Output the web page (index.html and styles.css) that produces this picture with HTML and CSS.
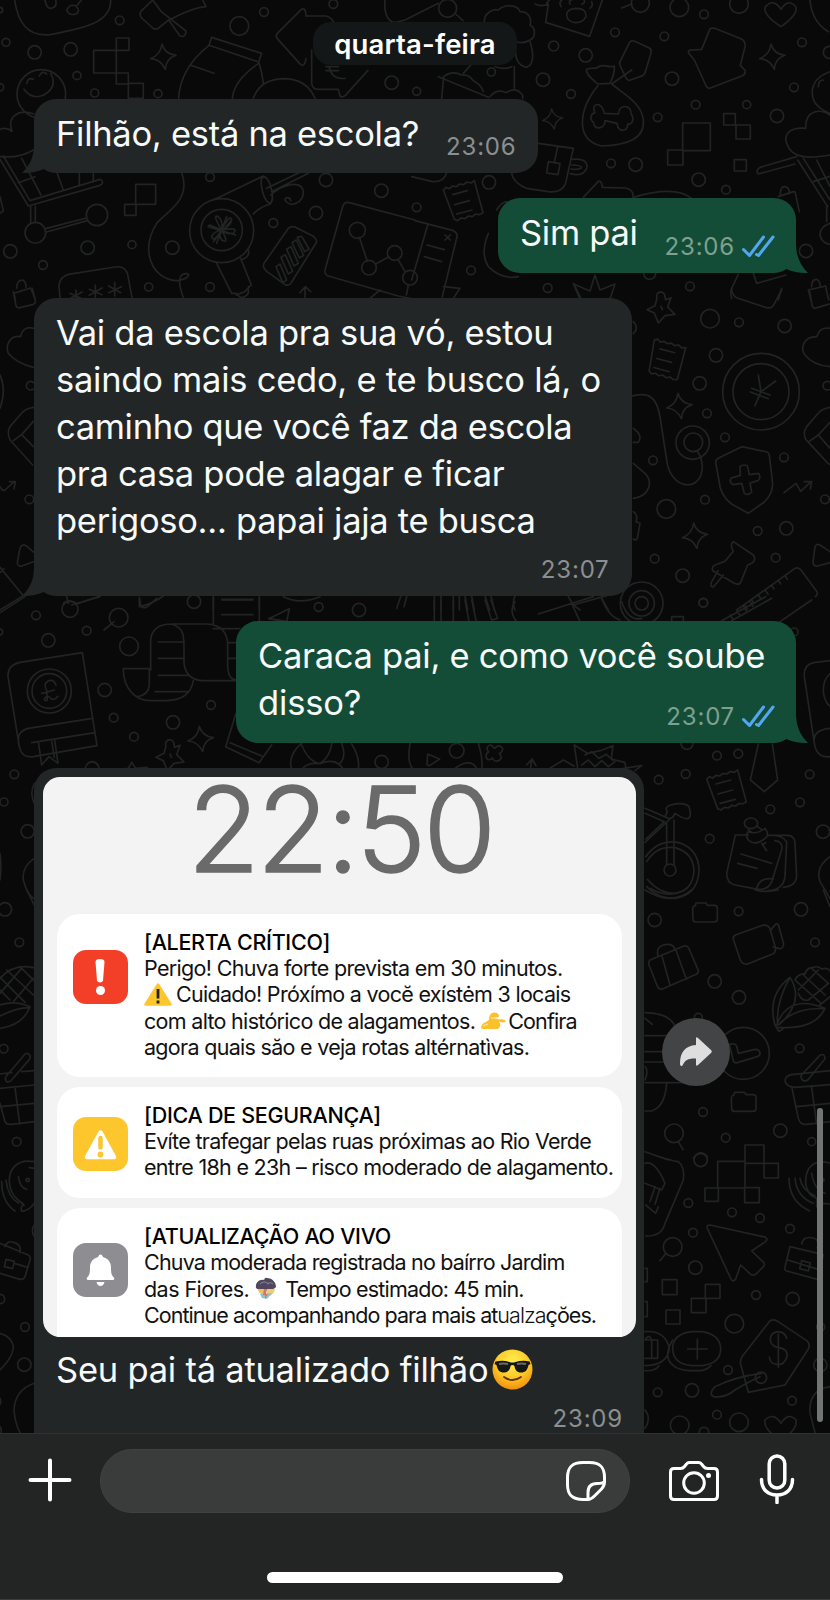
FILE: index.html
```html
<!DOCTYPE html>
<html lang="pt-BR">
<head>
<meta charset="utf-8">
<title>Conversa</title>
<link rel="stylesheet" href="styles.css">
</head>
<body>
<div class="screen">
<main class="chat">
<svg class="wallpaper" width="830" height="1433" viewBox="0 0 830 1433" aria-hidden="true">
<defs>
<path id="spark" d="M-4-38Q4-8 38-4Q8 6 6 38Q-8 8-38 6Q-8-6-4-38Z"/>
<path id="receipt" d="M-58-40l8-8 10 4 10-8 11 2 10-8 12 2 10-8 12 3 10-7 26 96-12 6-10-2-10 8-12-2-10 8-12-2-10 8-10-4zM-30-26l44-12M-24 4l44-12M-18 32l46-12"/>
<path id="star" d="M-12-30C-20-50 12-58 12-34L14-26 30-32 20-4 42 18 12 22-8 44-20 14-42 4-18-8ZM0-6l4 10"/>
</defs>
<g transform="scale(.33333)">
<path d="M44 0C55 80 95 110 150 104C210 90 335 80 332 0M135 0q5 30 22 24 15-5 10-24M200 30q10-20 28-12 15 15 0 24-22 6-28-12M232 15l12-15M458 0L425 32q-10 10 0 22l33 30q10 8 20-2l28-22 34 48q18 5 18-15L484 35 458 0M505 62C540 40 590 22 618 20L608 0"/>
<path d="M281 151h68v68h-68zM349 114h38v37h-38zM349 219h36v33h-36zM385 250h45v45h-45z"/>
<path d="M635 112l150 48-9 26-149-50zM627 136Q540 205 536 295M776 186Q788 225 790 252M776 190Q702 240 697 295M570 195l72 25M760 295Q780 238 850 236 920 236 945 295"/>
<path d="M918 48Q918 22 904 28L832 100q-7 8 0 16l70 78q12 8 16-18M918 48h60q20 5 25 25M935 150v100q2 18 20 18h60l5 20q8 6 16-2l68-75M1035 235q-40 5-48-35M978 200h38M978 212h38"/>
<circle cx="124" cy="282" r="73"/><path d="M72 268Q95 300 130 286 175 260 152 220M80 250q5-20 20-12M118 228q8-18 22-6M0 388q20-8 36 6C20 350 55 325 102 342M0 470q60 5 100-20"/>
<path d="M0 478L85 618l215-62q16-10 0-18L90 602 10 468M55 548l50-18M65 475l58 110M170 515l20 55M238 518v40M280 518v28M92 618v48M106 618v48M137 686l122-32M140 696l122-34M0 590l10 42-10 8"/><circle cx="106" cy="698" r="31"/><circle cx="291" cy="645" r="32"/>
<path d="M407 553h60v60h-60zM374 613h34v33h-34zM545 518C575 600 500 635 470 670 420 750 455 835 525 842 575 840 575 810 545 825 530 840 545 880 552 898"/>
<circle cx="665" cy="692" r="96"/><circle cx="665" cy="690" r="62"/><path d="M665 690Q635 640 655 650 670 665 665 690 690 640 695 660 690 680 665 690 720 680 700 700 680 705 665 690 690 735 665 720 655 705 665 690 640 730 635 710 640 695 665 690 610 680 630 675ZM680 650l-30 80M625 680l82 25M640 725l55-65"/>
<path d="M640 600L790 528M760 642Q780 620 812 612M790 528c25 10 35 75 20 82-20-5-35-70-20-82M800 565l100-48M815 575l110-55M812 585C850 550 905 540 910 575 910 610 870 625 855 600 855 590 870 590 872 602M650 790l45 90 15 0M722 775l32 80-20 20-25 10M745 750q5 20-18 28M710 880q15 25 35 0v-20"/>
<path d="M865 685L792 790q-6 12 8 24l55 40q10 5 18-5l75-120q6-10-8-20l-55-28q-12-4-20 4ZM828 800l12-8 20 48-12 8zM843 772l13-8 22 50-13 8zM860 748l13-8 22 50-13 8zM876 728l13-8 22 46-13 8zM892 712l13-3 22 38-13 8z"/>
<path d="M1245 660L1048 608q-15-4-20 12L975 810q-2 14 10 18l210 60 50 10M1078 712l24 72M1127 792l40-22M1195 780l20 35M1225 855l-6 30M1110 895l30-25"/><circle cx="1072" cy="691" r="24"/><circle cx="1107" cy="803" r="22"/><circle cx="1184" cy="759" r="22"/><circle cx="1230" cy="833" r="22"/>
<path d="M180 895l-3-40q4-25 28-32l140-22q30-5 38 22l14 75M228 870v36M210 880l36 16M246 876l-36 20M286 855v40M268 868l38 16M306 864l-38 22M344 848v40M326 858l36 20M364 860l-38 18M42 880l50-16 12 30M42 880l4 20M50 865q0-25 18-25 10 5 10 22M915 900v-38M900 878l16-18 16 15"/>
</g>
<g class="dots" transform="scale(.33333)">
<circle cx="18" cy="127" r="12"/><circle cx="104" cy="157" r="20"/><circle cx="212" cy="148" r="20"/><circle cx="359" cy="61" r="13"/><circle cx="231" cy="227" r="12"/><circle cx="284" cy="279" r="12"/><circle cx="474" cy="281" r="12"/><circle cx="718" cy="78" r="28"/><circle cx="792" cy="36" r="13"/><circle cx="1000" cy="12" r="13"/><circle cx="1175" cy="248" r="20"/><circle cx="0" cy="262" r="11"/><circle cx="0" cy="30" r="8"/><circle cx="31" cy="754" r="20"/><circle cx="129" cy="795" r="13"/><circle cx="263" cy="743" r="20"/><circle cx="396" cy="734" r="12"/><circle cx="446" cy="861" r="12"/><circle cx="517" cy="743" r="20"/><circle cx="630" cy="531" r="13"/><circle cx="630" cy="861" r="13"/><circle cx="820" cy="669" r="13"/><circle cx="948" cy="639" r="20"/><circle cx="978" cy="540" r="20"/><circle cx="1144" cy="572" r="20"/>
<use href="#spark" x="490" y="170"/>
</g>
<g transform="translate(415 0) scale(.33333)">
<path d="M-90 0Q-95 60-60 68L-30 60 70 10M122 42l22 20M360 12q20 10 40 0l-8 55 132 42L562 0M395 10l8-10M455 45q0-18 28-20 32 0 30 25-10 18-30 18-25 0-28-23M438 20q-8-15 5-22M525 25q10-5 5-20M465 12q-5-12 5-12M500 12q10 0 8-12M620 24l30-12"/><circle cx="98" cy="25" r="27"/><circle cx="676" cy="10" r="27"/>
<path d="M208 68C205 40 235 25 250 30 270 10 310 15 315 35 345 35 350 60 345 75 365 85 360 115 345 120 330 130 320 130 305 125M345 125Q365 190 335 202 300 195 302 150M298 200v65M70 230l150 62M80 295l6-65Q110 210 140 225 160 222 175 242 200 255 205 275M145 220l25-28M225 290q20-25 48-12 30-20 50 8v10M240 200q30 10 50 0"/>
<path d="M645 125q6-4 14-1l44 20q8 5 5 15l-18 60q-5 8-12 10l-34 12q-8 1-11-7l-18-38q-3-8 2-15zM548 252C530 235 510 220 515 208 530 200 545 210 550 200 570 190 580 205 598 198 600 220 592 235 585 250ZM548 258C490 330 480 420 560 438 640 435 690 415 685 360 680 310 630 285 590 252L650 210M568 340l42 2C612 310 650 315 648 340 660 360 650 375 638 372 640 395 610 400 606 370L570 362C570 390 535 390 536 368 520 355 530 340 540 338 525 310 560 300 568 340Z"/>
<path d="M885 86q8-3 18 0l75 30q15 8 12 25l-14 55 14 15q3 12-8 16l-98 38q-8 0-12-10l-34-75-18-22q0-10 16-8l24-2zM1098 80Q1045 45 1050 22 1075-8 1098 28 1120-8 1143 22 1148 45 1098 80ZM1185 0q5 65 55 95"/>
<path d="M803 369h83v83h-83zM758 450h46v45h-46zM926 341h35v34h-35zM963 375h43v42h-43zM958 479h36v34h-36z"/>
<path d="M370 430l105 15-20 90Q450 580 400 575L335 565Q290 545 290 515M428 440l-10 48M400 485l35 6-6 33-34-5zM472 478q45-5 44 25-10 28-50 18M470 495q30 0 30 8-10 8-32 4M-10 530l60 14q35 5 45-25M505 592l45-48q10-3 12 18l70 2q25 5 22 28M655 592Q780 555 830 595"/>
<path d="M1245 215Q1190 235 1192 280 1192 320 1245 340M1225 240q-15 0-15 20M1245 345C1215 325 1170 330 1172 385 1130 380 1105 400 1115 430 1130 480 1190 475 1245 465M1145 470l-110 32q-15 10-5 20l110-30M1148 480l90 140M1165 475l80 125M1195 545l50-16M1205 480l40 80M1235 620v45M1245 670q-30 10-30 35 5 25 30 28M1090 590l45-15q5-2 6 5l12 55M1096 585q0-25 12-25 14 0 16 20"/>
<path d="M1180 870l52-12q5 30 10 42M1180 870l8 30M1190 860q0-22 14-22 10 4 12 20M245 630q15-25 32-25M220 700q-25 60 0 100 40 40 90 30M0 662l115 30q15 8 10 22L80 898M38 675L-10 840M36 735l52 14M28 770l52 15M90 705l16 15M106 705l-16 15M85 860l50 5-20 30M540 825l15 45 45-18-15 45M540 825l-15 48-48-20 20 40M475 850l20 48M950 895q-5-20 0-30l20-42M1015 820l10 30 88-25M1100 865l-10 35"/>
</g>
<g class="dots" transform="translate(415 0) scale(.33333)">
<circle cx="416" cy="138" r="15"/><circle cx="512" cy="166" r="20"/><circle cx="600" cy="97" r="13"/><circle cx="748" cy="109" r="13"/><circle cx="229" cy="216" r="12"/><circle cx="384" cy="239" r="20"/><circle cx="468" cy="282" r="13"/><circle cx="728" cy="352" r="13"/><circle cx="771" cy="236" r="20"/><circle cx="842" cy="314" r="13"/><circle cx="995" cy="314" r="12"/><circle cx="1086" cy="348" r="20"/><circle cx="1137" cy="262" r="13"/><circle cx="1161" cy="127" r="13"/><circle cx="1243" cy="157" r="18"/><circle cx="793" cy="22" r="28"/><circle cx="867" cy="43" r="13"/><circle cx="972" cy="12" r="28"/><circle cx="588" cy="490" r="13"/><circle cx="662" cy="494" r="20"/><circle cx="851" cy="539" r="20"/><circle cx="933" cy="569" r="13"/><circle cx="222" cy="547" r="20"/><circle cx="5" cy="622" r="13"/><circle cx="168" cy="811" r="13"/><circle cx="398" cy="864" r="13"/><circle cx="825" cy="859" r="13"/><circle cx="1173" cy="753" r="20"/><circle cx="704" cy="820" r="18"/><circle cx="5" cy="274" r="12"/>
<use href="#spark" x="1072" y="170"/><use href="#spark" transform="translate(413 357) scale(.8)"/><use href="#receipt" x="143" y="610"/>
</g>
<g transform="translate(0 290) scale(.33333)">
<path d="M40 5l8 42q3 8 12 6l40-10q8-3 6-12L97-5M100 115C80 108 65 120 62 140 30 135 15 165 25 190 45 215 70 225 100 232M0 255q20 45 0 100M100 352Q75 355 60 375L30 410q-10 15 0 40l68 75M40 452l25-18L100 470M65 434l35-40M0 590q8 15 15 10l28-25M28 575h18l-4 22M60 775q5-15 18-8l24 20M60 775l-8 42q0 12 12 12l36-14M0 832l70 85L0 960M0 848l12-12M418 950v-22M420 950q40-10 70-32M640 918v42M778 918v42M665 930h94M850 920q50 25 110 0M190 940q15-15 40 0M230 942l70-24M200 920l5 20M1190 955l12-35M1220 920l-8 30"/>
</g>
<g transform="translate(415 290) scale(.33333)">
<path d="M950-5q0 20 15 28l90 30q15 4 22-10L1100 0M1184 5l8 44q3 8 14 4l40-12M1245 115C1220 110 1210 125 1205 140 1165 140 1155 175 1170 195 1190 220 1220 228 1245 230"/>
<circle cx="1038" cy="305" r="115"/><circle cx="1038" cy="305" r="84"/><path d="M1030 255l8 50 44-32M1038 305l-18 42M1010 295l55 20M1006 306l54 20"/>
<path d="M652 318C700 305 725 320 735 380L755 510C765 600 860 610 862 530Q860 500 848 485"/><circle cx="833" cy="458" r="50"/><circle cx="835" cy="457" r="28"/>
<path d="M980 470l76 16q6 2 7 10l10 85q0 30-25 55l-48 34-50-28q-35-25-38-70l-10-55q2-10 8-12zM975 530q8-8 22-3l6 27 28-4q8 14-2 22l-24 7 5 27q-10 12-22 4l-8-30-27 4q-12-10-4-20l27-8z"/>
<path d="M1107 608l36-28 14 24 32-30M1168 575l22 0-4 22M1245 352Q1220 355 1205 375L1175 410q-12 15-3 38l70 75M1182 455l28-20 35 40M1210 435l35-38M655 95q18 18 0 36M655 415q30 20 15 42h-15M655 520l35 30q20 20 10 45-10 25-45 30M655 665q15 10 8 30l12 5-8 45q-3 8-12 2"/>
<path d="M955 755l60 40q10 15-5 25l-12 5-20 50q-5 12-20 5l-65-38q-5-15 15-20l22-8 25-30q-12-20 0-29zM925 855l-30 36q-10 0-6-14l20-35M1200 770q5-10 15-5l30 20M1200 770l-6 48q2 12 14 10l37-10M965 960l175-125q10-5 18 5l48 65q3 10-5 15M990 946l7 11M1010 930l7 11M1030 915l7 11M1050 900l9 13M1070 886l7 11M1090 871l7 11M1110 857l7 11"/>
<circle cx="680" cy="940" r="64"/><circle cx="680" cy="940" r="38"/><circle cx="680" cy="940" r="20"/><path d="M58 918v42M78 918v42M115 918v42M133 918v42M150 918l8 42M170 918l8 42M210 918l14 42M228 918l10 42M300 918q-10 20 0 42M460 920l15 25 100-28M475 945l20 15M560 925l20 35"/>
</g>
<g class="dots" transform="translate(415 290) scale(.33333)">
<circle cx="885" cy="86" r="28"/><circle cx="972" cy="97" r="13"/><circle cx="1109" cy="108" r="20"/><circle cx="903" cy="196" r="20"/><circle cx="854" cy="280" r="20"/><circle cx="876" cy="370" r="13"/><circle cx="930" cy="442" r="13"/><circle cx="714" cy="511" r="13"/><circle cx="1107" cy="502" r="13"/><circle cx="1230" cy="628" r="13"/><circle cx="870" cy="629" r="13"/><circle cx="754" cy="657" r="28"/><circle cx="1028" cy="723" r="13"/><circle cx="1114" cy="715" r="20"/><circle cx="719" cy="806" r="13"/><circle cx="803" cy="857" r="20"/><circle cx="1082" cy="803" r="13"/><circle cx="865" cy="938" r="13"/><circle cx="1237" cy="287" r="13"/><circle cx="-1153" cy="287" r="13"/><circle cx="-1157" cy="628" r="13"/>
<use href="#spark" x="793" y="348"/><use href="#spark" x="840" y="737"/><use href="#star" x="738" y="55"/><use href="#receipt" transform="translate(748 214) rotate(30)"/>
</g>
<g transform="translate(0 600) scale(.33333)">
<path d="M247 158L60 187Q22 195 24 230L58 440Q65 475 100 470L291 437ZM58 440Q45 395 85 385L278 355M95 428L285 398M115 425l10 70 22-25 27 20-10-70M155 424l8 48"/>
<circle cx="148" cy="273" r="66"/><circle cx="148" cy="273" r="52"/><path d="M168 256q-5-18-22-14-18 8-6 30l2 28q-12 5-8-5 10-12 20 2 10 5 20-8M125 280l38-10"/>
<path d="M0 38L75-10M215 15L300-10M418-8l4 24q8 15 25 0L470-5M312 90l30-25M640-5v76M778-5v76M665 44h94M665-2h94M452 210V130C450 85 480 72 515 72H620Q685 75 683 140V200Q685 240 710 240M515 72C555 85 552 110 552 160V190Q558 240 610 242H705M475 126h78M475 175h78M475 226h90M465 275h100M370 206h78M370 206C370 270 410 302 450 302H500Q570 300 580 242M448 206v50Q445 285 412 290M685 128h30M685 175h30M640 86h80"/>
<path d="M806 56l62-30-8 40zM806 56l55 8M708 340L677 440 777 488 815 435M690 428l95 40M905 430C880 450 865 480 875 508M905 435q20 50 55 56 30-20 35-60M960 491q-40-5-55 18M960 491q50-20 70 18M1055 432q25 40 20 75M1025 430q15 40-5 60M1230 430q-10 60 10 78M255 505q5-20 25-20 15 5 18 22M350 508l35-3 10-18 12 18 35-3M103 550q-15 30 0 60M103 775Q65 800 70 840 80 880 100 895M0 760q5 40 0 80"/>
<circle cx="210" cy="28" r="24"/><circle cx="356" cy="53" r="28"/>
</g>
<g class="dots" transform="translate(0 600) scale(.33333)">
<circle cx="108" cy="46" r="13"/><circle cx="145" cy="121" r="20"/><circle cx="260" cy="92" r="13"/><circle cx="387" cy="139" r="28"/><circle cx="314" cy="270" r="20"/><circle cx="341" cy="353" r="13"/><circle cx="402" cy="410" r="13"/><circle cx="519" cy="367" r="20"/><circle cx="633" cy="315" r="13"/><circle cx="43" cy="523" r="13"/><circle cx="12" cy="606" r="12"/><circle cx="83" cy="694" r="20"/><circle cx="582" cy="5" r="20"/><circle cx="956" cy="21" r="13"/><circle cx="1077" cy="30" r="20"/><circle cx="1145" cy="486" r="20"/><circle cx="-2" cy="96" r="10"/>
<use href="#spark" x="602" y="417"/><use href="#star" x="510" y="468"/>
</g>
<g transform="translate(415 600) scale(.33333)">
<path d="M58 0v66M78 0v66M115 0v66M150 0l12 65M170 0l14 65M210 0l20 60 18-5M228 0l18 50M300 5q-20 30 5 60M370 42L535-10M470 10l25 55M560-5q20 55 55 65M620 5q20 60 60 50M770 65V50h35v15M920 62L1052-10M950 62L1070-5M1095 65L1190 0M945 45l9 13M965 32l9 13M985 19l9 13M1005 6l9 13"/>
<path d="M1245 182L1195 188Q1165 195 1168 230L1198 430Q1205 475 1245 470M1198 430Q1190 390 1245 385M1245 220q-20 20-20 50 0 30 20 50M1030 432L1006 540 1048 575 1088 540 1072 432M38 462l36 15-30 20-8-3zM188 510q-20-40-68-5M190 430q15 50 10 80M218 440q10-12 20 5 15-15 25 0 0 12-10 15 12 15-2 22-15 5-18-8-15 12-20-3 0-12 8-15-8-10-3-16zM335 495l16-18 12 20M351 477l-5 30M400 508l45-28 32 18M478 435l10 70M478 435l40 25 38-8 38-15-5 40 40 10 5 22M510 465l20-10 22 20 22-12 20 18M500 495l20-15 20 20 20-18 20 18 20-15M625 505l55-8-20 15"/>
<path d="M690 625l75 32-75 70M690 640l58 25-55 52M755 670v125M777 660v135M750 650q20 15 30-10 60 40 42-20-15-15-55-5-20 5-10 20zM960 705H1000M960 710L935 820Q935 850 960 855L1030 868Q1060 870 1070 845L1100 750Q1105 725 1080 722M1025 865q10-35 50-28M1065 705q35 0 50 20L1110 830Q1105 870 1060 872M1060 706h60q20 2 20 25l5 100Q1140 860 1105 862M978 762l92 28M968 790l58 15M1000 695q25 10 50-10 15 20 0 30-30 25-50 5-10-15 0-25M1000 690l12 8M1028 680l12 8M1040 730l15 22M1052 728l-10 6"/><ellipse cx="1008" cy="670" rx="20" ry="16"/>
<circle cx="765" cy="810" r="18"/><path d="M692 770q40-55 100-42 60 20 60 85-5 75-75 82-50 0-82-35M695 785q30-50 85-42 55 15 57 70-5 62-60 67-45 0-80-42"/>
<path d="M1245 770Q1200 800 1215 845L1245 895"/>
</g>
<g class="dots" transform="translate(415 600) scale(.33333)">
<circle cx="865" cy="8" r="13"/><circle cx="1137" cy="96" r="12"/><circle cx="125" cy="452" r="22"/><circle cx="816" cy="430" r="18"/><circle cx="906" cy="467" r="13"/><circle cx="970" cy="461" r="13"/><circle cx="731" cy="539" r="13"/><circle cx="812" cy="522" r="13"/><circle cx="1184" cy="523" r="13"/><circle cx="1155" cy="607" r="13"/><circle cx="1066" cy="628" r="13"/><circle cx="884" cy="716" r="13"/><circle cx="1224" cy="695" r="20"/>
<use href="#receipt" x="933" y="578"/>
</g>
<g transform="translate(0 890) scale(.33333)">
<path d="M80 0l25 50M0 265q40-45 100-32M20 240l80 75M0 262l75 75M0 300l30 30M60 230l42 42M100 265L40 335M65 235L0 310M0 345q45-15 90 5-20 55-90 65M0 378q50-25 90-25M20 575q-8-10 0-18l55-65q10-5 15 5 2 10-5 15l-50 58q-8 8-15 5zM0 552l35-4M65 545l38-3M0 595l103-10M0 650l103-10M0 640l15 55q5 10 20 8l68-8M45 592l14 110"/>
<circle cx="15" cy="58" r="20"/><circle cx="58" cy="157" r="13"/><circle cx="11" cy="476" r="13"/><circle cx="50" cy="755" r="13"/>
<path d="M103 815C50 805 20 840 30 890 35 920 60 935 70 942q5 10-2 0-8 20-2 22 25-5 36-24M55 860q5 35 25 38M5 875q0 60 40 88M18 870q5 50 38 70M103 835l-15-2M0 1060l85 35q8 5 5 15l-15 50q-5 10-15 8L0 1150M15 1070q8-20 25-13 25 5 20 30M18 1108l25 6-5 22-25-6zM43 1120l40 12"/><circle cx="83" cy="870" r="5"/><circle cx="75" cy="1311" r="13"/><circle cx="0" cy="1227" r="14"/><circle cx="73" cy="1424" r="20"/><path d="M103 1005q-12 15 0 35M0 1330q35 10 40 40Q40 1400 0 1440M103 1480Q45 1500 42 1560 45 1600 60 1628M0 1525q4 10 0 18M0 1610q5 5 3 18"/>
</g>
<g transform="translate(415 890) scale(.33333)">
<path d="M690 0q80 50 140 0M705-5q60 35 110 0M1020 0q30 8 70 0M1225 0l20 50M833 60q0-12 8-13l2-8h30l4 7h22q8 0 8 8v34q0 8-10 8h-54q-9 0-9-8zM949 628q0-12 8-13l2-8h30l4 7h22q8 0 8 8v34q0 8-10 8h-54q-9 0-9-8z"/>
<path d="M955 148q-2-10 8-14l80-28q15-3 22 10l16 56q3 14-8 20l-75 30q-15 3-22-12zM1065 122l18-20q6-2 8 5l15 55q-2 15-12 14l-20-5M705 210l102-42q10-2 14 6l28 65q3 10-5 14l-102 44q-9 2-14-6l-26-66q-3-9 3-15zM740 195l25 90M782 178l32 90M730 200q-10-30 20-36 25-5 30 15"/>
<path d="M1080 405q-25-90 45-143 45 70-30 140M1125 262q-40 70-38 135M1085 405Q1120 310 1230 355 1200 420 1090 412M1090 405Q1140 350 1228 356M1080 405l12 20 14-10M1140 270q10-20 30-18 5-20 25-20 15-5 25 5 15-5 25 5M1140 270l78 70M1165 255l65 60M1190 235l50 45M1240 280l-60 50M1210 240l-60 60M1245 320l-30 25M1150 310q10 25 30 20"/>
<circle cx="985" cy="490" r="78"/><path d="M945 470q-5-10 8-8 8-2 12 6l5 22 50-12q15 0 15 12 0 8-8 10l-60 18q-8 2-12-5zM690 368Q770 370 782 415M690 385l22 18M690 437h70M690 485h55M690 516h60M690 578h110M755 580q-5 70-45 83h-20M690 530q12 10 0 40"/>
<path d="M1162 570q-8-10 0-18l52-55q10-8 15 2 2 10-5 15l-45 55q-8 8-17 1zM1245 542l-115 12q-20 3-20 20 5 18 30 18l105-8M1130 590l20 95q5 20 25 18l70-8M1145 650l100-10M1190 592l15 110"/>
<circle cx="777" cy="730" r="28"/><path d="M790 755l14 24M835 805q20-30 42-5M690 785l70 25M690 785Q760 810 790 815 810 830 805 870L750 1000Q740 1040 692 1038M690 820q30-10 60 60l-10 20-50-20M720 890l-15 45M735 895l-15 48M692 945l30 25 8-20"/>
<path d="M990 765h57v55h-57zM908 814h82v80h-82zM1047 820h43v44h-43zM870 894h40v40h-40zM989 893h44v45h-44z"/>
<path d="M1245 820C1200 805 1170 830 1172 880 1175 905 1190 920 1205 925v25l18-10 20 2M1190 850q8 50 40 60M1122 865q0 70 62 98M1140 865q5 55 55 75M1155 865q5 35 45 52"/>
<path d="M885 1005l165 36q10 5 2 14l-42 28 36 34q5 8-2 14l-22 22q-8 5-15 0l-30-28-15 42q-8 12-15-2L877 1015q-3-10 8-10zM1125 1070l100 24-15 75-95-26q-8-3-5-12zM1160 1062q5-25 35-18 20 5 12 30M1118 1110l104 32M1160 1112l26 7-6 24-26-7z"/>
<circle cx="773" cy="1071" r="28"/><path d="M753 1090l-18 22M742 1169h44v45h-44zM871 1183h44v42h-44zM829 1225h44v43h-44zM753 1260h42v42h-42zM690 1135h7v40h-7M690 1235h7v45h-7"/>
<path d="M830 1325h32q55 10 55 52 0 42-55 50h-32q-55-5-57-50 0-45 57-52ZM773 1350q-30 50 0 75 15 15 50 17h30q20 0 35-15M818 1377h58M847 1347v60M690 1325q60-5 73 50-5 50-73 52M690 1442q30 2 42-15M690 1350h38v55h-38M710 1350v55M690 1350q12-20 20 0"/>
<path d="M1065 1292q10-5 20 0l90 60q12 10 5 25l-70 108-110 22L976 1420q0-10 5-20zM1115 1345q-5-20-28-20-25 5-20 30 5 15 25 18 30 5 23 30-10 25-30 20-20-2-22-22M1090 1332v100M1040 1450Q960 1460 900 1490 880 1510 895 1520 930 1525 960 1500 1000 1475 1035 1460"/><circle cx="1038" cy="1463" r="17"/>
<path d="M1098 1650Q1045 1620 1050 1590 1075 1565 1098 1600 1120 1565 1143 1590 1148 1620 1098 1650ZM1245 1490Q1180 1500 1185 1570L1200 1628M690 1560q20 25 0 55"/>
</g>
<g class="dots" transform="translate(415 890) scale(.33333)">
<circle cx="719" cy="90" r="20"/><circle cx="971" cy="64" r="13"/><circle cx="1158" cy="58" r="20"/><circle cx="1200" cy="157" r="13"/><circle cx="899" cy="274" r="20"/><circle cx="972" cy="322" r="20"/><circle cx="850" cy="382" r="12"/><circle cx="1154" cy="475" r="13"/><circle cx="864" cy="666" r="13"/><circle cx="932" cy="743" r="13"/><circle cx="1096" cy="722" r="20"/><circle cx="1190" cy="755" r="12"/><circle cx="857" cy="810" r="20"/><circle cx="820" cy="939" r="13"/><circle cx="951" cy="967" r="13"/><circle cx="1035" cy="984" r="13"/><circle cx="834" cy="1028" r="13"/><circle cx="1125" cy="1016" r="13"/><circle cx="841" cy="1133" r="20"/><circle cx="1023" cy="1215" r="13"/><circle cx="1133" cy="1227" r="20"/><circle cx="958" cy="1301" r="28"/><circle cx="1217" cy="1311" r="12"/><circle cx="939" cy="1440" r="13"/><circle cx="1216" cy="1425" r="20"/><circle cx="728" cy="1507" r="13"/><circle cx="831" cy="1501" r="20"/><circle cx="1131" cy="1532" r="13"/><circle cx="906" cy="1574" r="13"/><circle cx="972" cy="1597" r="28"/><circle cx="794" cy="1606" r="28"/><circle cx="867" cy="1626" r="14"/><circle cx="1222" cy="870" r="5"/>
</g>
</svg>

<div class="date"><span class="date-text">quarta-feira</span></div>

<article class="bubble in b1">
<svg class="tail tail-in" width="24" height="30" viewBox="0 0 24 30"><path d="M12 0C12 13 9 21 0 30c9 0 16-1 24-5V0z"/></svg>
<p class="text"><span class="l1">Filhão, está na escola?</span></p>
<div class="meta"><time>23:06</time></div>
</article>

<article class="bubble out b2">
<svg class="tail tail-out" width="24" height="30" viewBox="0 0 24 30"><path d="M12 0C12 13 16 22 24 30c-9 0-16-1-24-5V0z"/></svg>
<p class="text"><span class="l2">Sim pai</span></p>
<div class="meta"><time>23:06</time><svg class="ticks" width="33" height="23" viewBox="0 0 33 23"><path d="M1.500 14.500L7.500 20.500 21.500 2M14.500 19.500L16.500 20.500 31 2"/></svg></div>
</article>

<article class="bubble in b3">
<svg class="tail tail-in" width="24" height="30" viewBox="0 0 24 30"><path d="M12 0C12 13 9 21 0 30c9 0 16-1 24-5V0z"/></svg>
<p class="text"><span class="l3">Vai da escola pra sua vó, estou</span><br><span class="l4">saindo mais cedo, e te busco lá, o</span><br><span class="l5">caminho que você faz da escola</span><br><span class="l6">pra casa pode alagar e ficar</span><br><span class="l7">perigoso... papai jaja te busca</span></p>
<div class="meta"><time>23:07</time></div>
</article>

<article class="bubble out b4">
<svg class="tail tail-out" width="24" height="30" viewBox="0 0 24 30"><path d="M12 0C12 13 16 22 24 30c-9 0-16-1-24-5V0z"/></svg>
<p class="text"><span class="l8">Caraca pai, e como você soube</span><br><span class="l9">disso?</span></p>
<div class="meta"><time>23:07</time><svg class="ticks" width="33" height="23" viewBox="0 0 33 23"><path d="M1.500 14.500L7.500 20.500 21.500 2M14.500 19.500L16.500 20.500 31 2"/></svg></div>
</article>

<div class="row">
<article class="bubble in b5">
<section class="photo">
<div class="clock"><span>22:50</span></div>
<div class="card c1">
<svg class="app" width="55" height="54" viewBox="0 0 55 54"><rect width="55" height="54" rx="13" fill="#f43f28"/><path d="M22.500 12q0-3 4.500-3t4.500 3L30 30.500q-.3 2-3 2t-3-2z" fill="#fff"/><circle cx="27.500" cy="40.500" r="4.500" fill="#fff"/></svg>
<div class="body"><h3><span class="t1">[ALERTA CRÍTICO]</span></h3>
<p><span class="n1">Perigo! Chuva forte prevista em 30 minutos.</span></p>
<p><svg class="em warn" width="28" height="23" viewBox="0 0 28 23"><path d="M14 1.500L26.500 21.500H1.500z" fill="#fcc62c" stroke="#fcc62c" stroke-width="2.500" stroke-linejoin="round"/><path d="M14 6v9.500M14 17.500v3" stroke="#222" stroke-width="2.800"/></svg><span class="n2">Cuidado! Próxímo a vocĕ exístėm 3 locais</span></p>
<p><span class="n3">com alto histórico de alagamentos.</span><svg class="em hand" width="25" height="18" viewBox="0 0 25 18"><path d="M0 15Q1 11 5 10L8 8Q8 1 13 0.500q5 0 5 4l-4 2 5 1q4-1 6 2-2 2-7 0 3 5-1 7.500H2q-2 0-2-2z" fill="#fcc02a"/><path d="M10 6h6M2 14l5-2" stroke="#fff3c8"/></svg><span class="n4">Confira</span></p>
<p><span class="n5">agora quais săo e veja rotas altérnatìvas.</span></p></div>
</div>
<div class="card c2">
<svg class="app" width="55" height="54" viewBox="0 0 55 54"><rect width="55" height="54" rx="13" fill="#fcc62c"/><path d="M27.500 15.500L41 40H14z" fill="#fff" stroke="#fff" stroke-width="4.500" stroke-linejoin="round"/><path d="M27.500 21v9.500" stroke="#fcc62c" stroke-width="4.500" stroke-linecap="round"/><circle cx="27.500" cy="37.500" r="2.900" fill="#fcc62c"/></svg>
<div class="body"><h3><span class="t2">[DICA DE SEGURANÇA]</span></h3>
<p><span class="n6">Evíte trafegar pelas ruas próximas ao Rio Verde</span></p>
<p><span class="n7">entre 18h e 23h – risco moderado de alagamento.</span></p></div>
</div>
<div class="card c3">
<svg class="app" width="55" height="54" viewBox="0 0 55 54"><rect width="55" height="54" rx="13" fill="#8e8e92"/><path d="M27.500 11.500c1.500 0 2 1.500 2.500 2.500 5 1.500 8 5 8 10.500 0 6 .5 7.500 2.500 9.500q2 3-1 3h-24q-3 0-1-3c2-2 2.500-3.500 2.500-9.500 0-5.500 3-9 8-10.500.5-1 1-2.500 2.500-2.500zM23.500 39h8q-1 4-4 4t-4-4z" fill="#fff"/></svg>
<div class="body"><h3><span class="t3">[ATUALIZAÇÃO AO VIVO</span></h3>
<p><span class="n8">Chuva moderada registrada no baírro Jardim</span></p>
<p><span class="n9">das Fiores.</span><svg class="em storm" width="22" height="23" viewBox="0 0 22 23"><path d="M1 11C0 5 5 2 9 3q1-3 3-2c5 0 9 4 9 9-3 4-17 4-20 1z" fill="#50475f"/><path d="M3 12h7v6q-7-1-7-6z" fill="#f0bf60"/><path d="M12 12h8q-1 6-8 8z" fill="#efcb74"/><path d="M5 17l12-1-5 6-5-1z" fill="#8bc2d7"/><path d="M9 12l3 0-1 5 2 0-3 5 0-4-2 0z" fill="#d97559"/><path d="M5 7q4-4 9 0M12 7q4-3 6 0" stroke="#8e819b" fill="none"/></svg><span class="n10">Tempo estimado: 45 min.</span></p>
<p><span class="n11">Continue acompanhando para mais at<i>ualza</i>çŏes.</span></p></div>
</div>
</section>
<p class="text caption"><span class="l10">Seu pai tá atualizado filhão</span><svg class="cool" width="41" height="41" viewBox="0 0 41 41"><defs><radialGradient id="face" cx=".5" cy=".3" r=".72"><stop offset="0" stop-color="#fff04f"/><stop offset=".55" stop-color="#fdca28"/><stop offset="1" stop-color="#f28b0c"/></radialGradient></defs><circle cx="20.500" cy="20.500" r="20" fill="url(#face)"/><path d="M3.500 12.500q8-1.500 14 .5 3 1 6 0 7-2 14-.5l1 2.500-2 1c-1 5-3 7.500-7.500 7.500-4 0-6-2.500-6.500-6.500q-2-2-4 0c-.5 4-2.500 6.500-6.500 6.500-4.500 0-6.500-2.500-7.500-7.500l-2-1z" fill="#161717"/><path d="M7 15q4-1 9 0M25 15q4-1 9 0" stroke="#676c62" stroke-width="2" fill="none"/><path d="M12 28q8.500 6 17 0" stroke="#633106" stroke-width="1.800" fill="none" stroke-linecap="round"/></svg></p>
<div class="meta"><time>23:09</time></div>
</article>
<button class="forward" aria-label="Encaminhar"><svg width="34" height="30" viewBox="0 0 34 30"><path d="M17 1.500q0-2 2-.5l13 12q1.500 1.500 0 3L19 28q-2 1.500-2-.5V21.500C10 21 6 23 4 27.500 3 30 1 29 1 27 1 15 6 9 17 8z" fill="#dededf"/></svg></button>
</div>
<div class="scrollbar"></div>
</main>

<footer class="composer">
<div class="bar">
<svg class="plus" width="44" height="44" viewBox="0 0 44 44"><path d="M22 2.500v39M2.500 22h39"/></svg>
<div class="field"><svg width="40" height="40" viewBox="0 0 40 40"><path d="M22 38.500H17C6 38.500 1.500 34 1.500 23.500V16.500C1.500 6 6 1.500 17 1.500H23.500C34 1.500 38.500 6 38.500 16.500V20.500C38.500 24 37.500 26 35.500 28L29 34.500C26.500 37 25 38.500 22 38.500ZM22 38.300V31.500C22 25.500 24.500 22.500 31 22.500 36 22.500 37.500 22 38.400 20.500"/></svg></div>
<svg class="cam" width="50" height="40" viewBox="0 0 50 40"><path d="M5 7.500H11.500Q14 7.500 15.500 5.500L17.500 3Q18.500 1.500 20.500 1.500H29.500Q31.500 1.500 32.500 3L34.500 5.500Q36 7.500 38.500 7.500H45Q48.500 7.500 48.500 11V35Q48.500 38.500 45 38.500H5Q1.500 38.500 1.500 35V11Q1.500 7.500 5 7.500Z"/><circle cx="25" cy="22" r="10.300"/><circle cx="39.500" cy="14.500" r="2.500" class="solid"/></svg>
<svg class="mic" width="36" height="50" viewBox="0 0 36 50"><rect x="10.200" y="2" width="15.600" height="32" rx="7.800"/><path d="M2.500 25.500C2.500 35.500 9 41 18 41S33.500 35.500 33.500 25.500M18 41v7.500"/></svg>
</div>
<div class="home"></div>
</footer>
</div>
</body>
</html>
```
FILE: styles.css
```css
* { box-sizing: border-box; }
body { margin: 0; background: #090909; font-family: Inter, "Liberation Sans", sans-serif; }
p, h3 { margin: 0; }
.screen { width: 830px; height: 1600px; display: flex; flex-direction: column; overflow: hidden; }
.chat { position: relative; height: 1433px; flex: none; overflow: hidden; display: flex; flex-direction: column; gap: 25.5px; padding: 22px 34px 0; background: #090909; }
.wallpaper { position: absolute; left: 0; top: 0; fill: none; stroke: #222323; stroke-width: 5; stroke-linejoin: round; stroke-linecap: round; }

.date { position: relative; width: 204px; height: 43px; margin: 0 auto 8px; border-radius: 18px; background: #141717; color: #fff; font-size: 27.500px; font-weight: 600; letter-spacing: .15px; line-height: 45px; text-align: center; white-space: nowrap; }

.bubble { position: relative; flex: none; display: grid; border-radius: 22px; }
.in { align-self: flex-start; background: #222627; }
.out { align-self: flex-end; background: #144d37; }
.b1 { width: 504px; height: 74px; }
.b2 { width: 298px; height: 74.500px; }
.b3 { width: 598px; height: 297.500px; }
.b4 { width: 560px; height: 121.500px; }
.b5 { width: 610px; height: 700px; display: flex; flex-direction: column; padding: 9px 8px 0 9px; }
.tail { position: absolute; bottom: 0; }
.tail-in { left: -12px; fill: #222627; }
.tail-out { right: -12px; fill: #144d37; }
.text { position: relative; grid-area: 1 / 1; padding: 11.300px 0 0 22px; color: #f7fafa; font-size: 34.500px; line-height: 47px; letter-spacing: -.28px; white-space: nowrap; }
.l4 { letter-spacing: -.25px; }
.l5 { letter-spacing: -.34px; }
.l9 { letter-spacing: -.15px; }
.l10 { letter-spacing: -.23px; }
.meta { position: relative; grid-area: 1 / 1; justify-self: end; align-self: end; display: flex; align-items: center; gap: 7px; padding: 0 21.500px 13.500px 0; font-size: 24px; letter-spacing: .8px; line-height: 24px; color: #8c8f91; }
.b3 .meta { padding-right: 22.500px; }
.out .meta { color: #7ea08f; padding-right: 21px; }
.ticks { fill: none; stroke: #53a6f0; stroke-width: 3; stroke-linecap: round; stroke-linejoin: round; margin-top: -2px; }

.row { display: flex; align-items: flex-start; gap: 18px; }
.photo { height: 559.500px; flex: none; border-radius: 17px; overflow: hidden; background: #f3f3f4; padding: 0 14px; display: flex; flex-direction: column; gap: 10.500px; }
.clock { height: 126px; flex: none; color: #6a6a6a; font-size: 118px; font-weight: 300; line-height: 104px; letter-spacing: -3.100px; -webkit-text-stroke: 1.500px #6a6a6a; padding-left: 130.500px; white-space: nowrap; }
.card { flex: none; display: flex; gap: 16px; padding: 0 0 0 16px; border-radius: 23px; background: #fff; }
.c1 { height: 163px; }
.c2 { height: 110.500px; }
.c3 { height: 160px; }
.app { flex: none; }
.c1 .app { margin-top: 36.500px; }
.c2 .app { margin-top: 30px; }
.c3 .app { margin-top: 34.500px; }
.body { color: #111; font-size: 21.500px; line-height: 26.400px; letter-spacing: -.7px; white-space: nowrap; padding-top: 15px; }
.c2 .body { padding-top: 14.500px; }
.body h3 { font-size: 21.500px; font-weight: 500; letter-spacing: -.3px; line-height: 26.400px; color: #000; }
.body p { height: 26.400px; display: flex; align-items: center; }
.body i { font-style: normal; font-weight: 300; }
.n1 { letter-spacing: -.67px; }
.n4 { letter-spacing: -.85px; }
.n8 { letter-spacing: -.83px; }
.n9 { letter-spacing: -.55px; }
.n10 { letter-spacing: -.8px; }
.n11 { letter-spacing: -.95px; }
.warn { margin-right: 4px; }
.hand { margin: 0 2px 0 6px; }
.storm { margin: 0 8px 0 6px; }
.caption { padding: 9.800px 0 0 13px; display: flex; align-items: center; }
.cool { margin-left: 4px; }
.b5 .meta { align-self: flex-end; padding: 0 13px 0 0; margin-top: 14px; }
.forward { width: 68px; height: 68px; margin-top: 250px; border: 0; padding: 0; border-radius: 50%; background: #434445; position: relative; display: flex; align-items: center; justify-content: center; }
.scrollbar { position: absolute; left: 817px; top: 1108px; width: 6px; height: 314px; border-radius: 3px; background: #727373; }

.composer { flex: 1; background: #232525; border-top: 1px solid #303232; border-bottom: 1px solid #3b3c3c; display: flex; flex-direction: column; align-items: center; }
.bar { align-self: stretch; display: flex; align-items: center; margin-top: 14.500px; padding-left: 28px; }
.bar svg { fill: none; stroke: #fff; stroke-width: 3; stroke-linecap: round; stroke-linejoin: round; flex: none; }
.bar .plus { stroke-width: 4; margin-top: -1px; }
.bar .solid { fill: #fff; stroke: none; }
.field { width: 530px; height: 64px; margin-left: 28px; border-radius: 32px; background: #3a3b3b; border: 1px solid #404141; display: flex; align-items: center; justify-content: flex-end; padding-right: 23px; }
.cam { margin-left: 39px; }
.bar .mic { margin-left: 40px; margin-top: -3px; stroke-width: 3.500; }
.home { width: 296px; height: 11px; margin-top: 59px; border-radius: 6px; background: #fff; }
```
